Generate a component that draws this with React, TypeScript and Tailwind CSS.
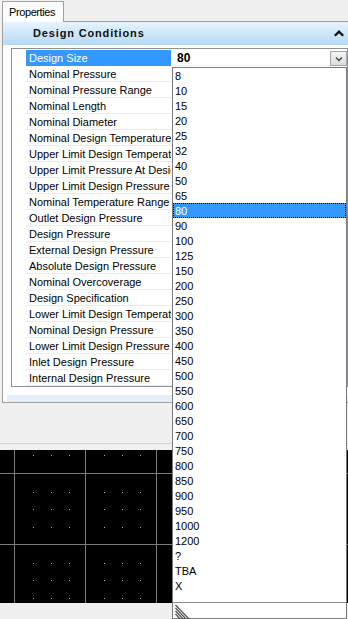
import * as React from "react";

const fields = [
    "Design Size",
    "Nominal Pressure",
    "Nominal Pressure Range",
    "Nominal Length",
    "Nominal Diameter",
    "Nominal Design Temperature",
    "Upper Limit Design Temperature",
    "Upper Limit Pressure At Design Temperature",
    "Upper Limit Design Pressure",
    "Nominal Temperature Range",
    "Outlet Design Pressure",
    "Design Pressure",
    "External Design Pressure",
    "Absolute Design Pressure",
    "Nominal Overcoverage",
    "Design Specification",
    "Lower Limit Design Temperature",
    "Nominal Design Pressure",
    "Lower Limit Design Pressure",
    "Inlet Design Pressure",
    "Internal Design Pressure",
];

const sizes = [
    "8", "10", "15", "20", "25", "32", "40", "50", "65", "80", "90", "100", "125", "150",
    "200", "250", "300", "350", "400", "450", "500", "550", "600", "650", "700", "750",
    "800", "850", "900", "950", "1000", "1200", "?", "TBA", "X",
];

const selected = "80";

// dotted drawing canvas under the property grid
function Canvas() {
    const vx = [14.5, 85.5, 156.5, 227.5, 298.5];
    const hy = [23.5, 94.5];
    const dotX: number[] = [];
    vx.forEach((x) => [18, 36, 54].forEach((d) => dotX.push(Math.round(x + d))));
    const dotY = [5, 42, 59, 77, 113, 130, 148];
    return (
        <svg width="348" height="153" className="block bg-black">
            {vx.map((x) => (
                <line key={x} x1={x} y1={0} x2={x} y2={153} stroke="#7c7c7c" strokeWidth={1} />
            ))}
            {hy.map((y) => (
                <line key={y} x1={0} y1={y} x2={348} y2={y} stroke="#7c7c7c" strokeWidth={1} />
            ))}
            {dotY.map((y) =>
                dotX.map((x) => <rect key={`${x}-${y}`} x={x} y={y} width={1} height={1} fill="#b0b0b0" />)
            )}
        </svg>
    );
}

export default function App() {
    return (
        <div className="relative w-[348px] h-[619px] overflow-hidden bg-[#f0f0f0] font-['Liberation_Sans',Arial,sans-serif] text-[11px] text-black">
            {/* Tab strip */}
            <div className="flex pt-px">
                <div className="ml-[2px] flex h-[21px] w-[62px] items-center border border-b-0 border-[#a0a0a0] bg-[#fcfcfc] pl-[6px] tracking-[-0.4px]">
                    Properties
                </div>
                <div className="h-[21px] flex-1 border-b border-[#a0a0a0]" />
            </div>

            {/* Panel */}
            <div className="ml-[2px] border-b border-l border-[#a0a0a0] bg-white">
                <div className="flex h-[23px] items-center justify-between bg-gradient-to-b from-[#e6f3fd] to-[#b6daf4] pl-[30px] pr-[4px]">
                    <span className="font-bold tracking-[0.85px] text-[#111]">Design Conditions</span>
                    <svg width="10" height="7" viewBox="0 0 10 7">
                        <polygon points="0,5 5,0 10,5 8.4,6.6 5,3.2 1.6,6.6" fill="#111" />
                    </svg>
                </div>

                <div className="h-[3px]" />

                {/* Property grid */}
                <div className="ml-[8px] border border-[#8e9297] bg-white pt-px">
                    {fields.map((f, i) => (
                        <div key={f} className="flex h-[16px]">
                            <div className="w-[14px]" />
                            <div
                                className={`w-[145px] overflow-hidden whitespace-nowrap pl-[3px] pt-px leading-[15px] border-b ${
                                    i === 0 ? "bg-[#3399ff] text-white border-[#3399ff]" : "border-[#ededed]"
                                }`}
                            >
                                {f}
                            </div>
                            <div className="flex flex-1 items-start justify-between border-b border-[#ededed] pl-[6px]">
                                {i === 0 ? (
                                    <>
                                        <span className="pt-px text-[12px] font-bold leading-[15px]">{selected}</span>
                                        <div className="mt-px flex h-[15px] w-[17px] items-center justify-center border border-[#a6a6a6] bg-gradient-to-b from-[#f4f4f4] to-[#dcdcdc]">
                                            <svg width="8" height="6" viewBox="0 0 8 6">
                                                <polyline points="1,1.5 4,4.5 7,1.5" fill="none" stroke="#444" strokeWidth={1.4} />
                                            </svg>
                                        </div>
                                    </>
                                ) : null}
                            </div>
                        </div>
                    ))}
                </div>

                <div className="h-[8px]" />
                <div className="ml-[4px] h-[7px] bg-[#e3f0fb]" />
            </div>

            {/* Lower toolbar band */}
            <div className="h-[40px]" />
            <div className="h-px bg-[#d2d2d2]" />
            <div className="h-[6px]" />

            <Canvas />

            {/* Open dropdown list */}
            <div className="absolute left-[172px] top-[67px] flex h-[552px] w-[175px] flex-col border border-[#7a7a7a] bg-white">
                <div className="flex-1">
                    {sizes.map((s) => (
                        <div
                            key={s}
                            className={`h-[15px] overflow-hidden pl-[2px] leading-[17px] ${
                                s === selected
                                    ? "bg-[#3399ff] text-white outline-1 outline-dotted -outline-offset-1 outline-black"
                                    : ""
                            }`}
                        >
                            {s}
                        </div>
                    ))}
                </div>
                <div className="h-[16px] border-t border-[#8a8a8a] pl-[2px] pt-px">
                    <svg width="16" height="15" viewBox="0 0 16 15">
                        {[1, 4, 7, 10].map((k) => (
                            <line key={k} x1={0.5} y1={k} x2={14.5 - k + 0.5} y2={15} stroke="#555" strokeWidth={1.3} />
                        ))}
                    </svg>
                </div>
            </div>
        </div>
    );
}
